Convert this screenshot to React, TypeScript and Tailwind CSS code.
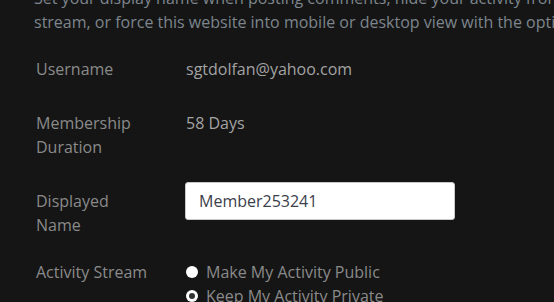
export default function App() {
  return (
    <div
      className="h-[302px] w-[554px] overflow-hidden bg-[#151515] text-[16px] leading-6"
      style={{ fontFamily: '"Open Sans", sans-serif' }}
    >
      <div className="pl-[34px]">
        <p className="mt-[-14px] whitespace-nowrap text-[#7d858d]">
          Set your display name when posting comments, hide your activity from the
          <br />
          stream, or force this website into mobile or desktop view with the options below.
        </p>
      </div>

      <div className="mt-[23px] pl-[36px]">
        <div className="flex">
          <div className="w-[150px] text-[#8a8a8a]">Username</div>
          <div className="text-[#a3a3a3]">sgtdolfan@yahoo.com</div>
        </div>

        <div className="mt-[30px] flex">
          <div className="w-[150px] text-[#8a8a8a]">
            Membership
            <br />
            Duration
          </div>
          <div className="text-[#a3a3a3]">58 Days</div>
        </div>

        <div className="mt-[23px] flex">
          <div className="w-[149px] pt-[7px] text-[#8a8a8a]">
            Displayed
            <br />
            Name
          </div>
          <input
            readOnly
            value="Member253241"
            className="h-[38px] w-[270px] rounded-[3px] border border-[#c8c8c8] bg-white px-[13px] text-[16px] text-[#3b404a] outline-none"
            style={{ fontFamily: '"Open Sans", sans-serif' }}
          />
        </div>

        <div className="mt-[23px] flex">
          <div className="w-[150px] text-[#8a8a8a]">Activity Stream</div>
          <div className="text-[#8a8a8a]">
            <label className="flex items-center gap-[8px]">
              <span className="h-[12px] w-[12px] rounded-full bg-white" />
              Make My Activity Public
            </label>
            <label className="flex items-center gap-[8px]">
              <span className="flex h-[12px] w-[12px] items-center justify-center rounded-full bg-white">
                <span className="h-[6px] w-[6px] rounded-full bg-[#333]" />
              </span>
              Keep My Activity Private
            </label>
          </div>
        </div>
      </div>
    </div>
  );
}
